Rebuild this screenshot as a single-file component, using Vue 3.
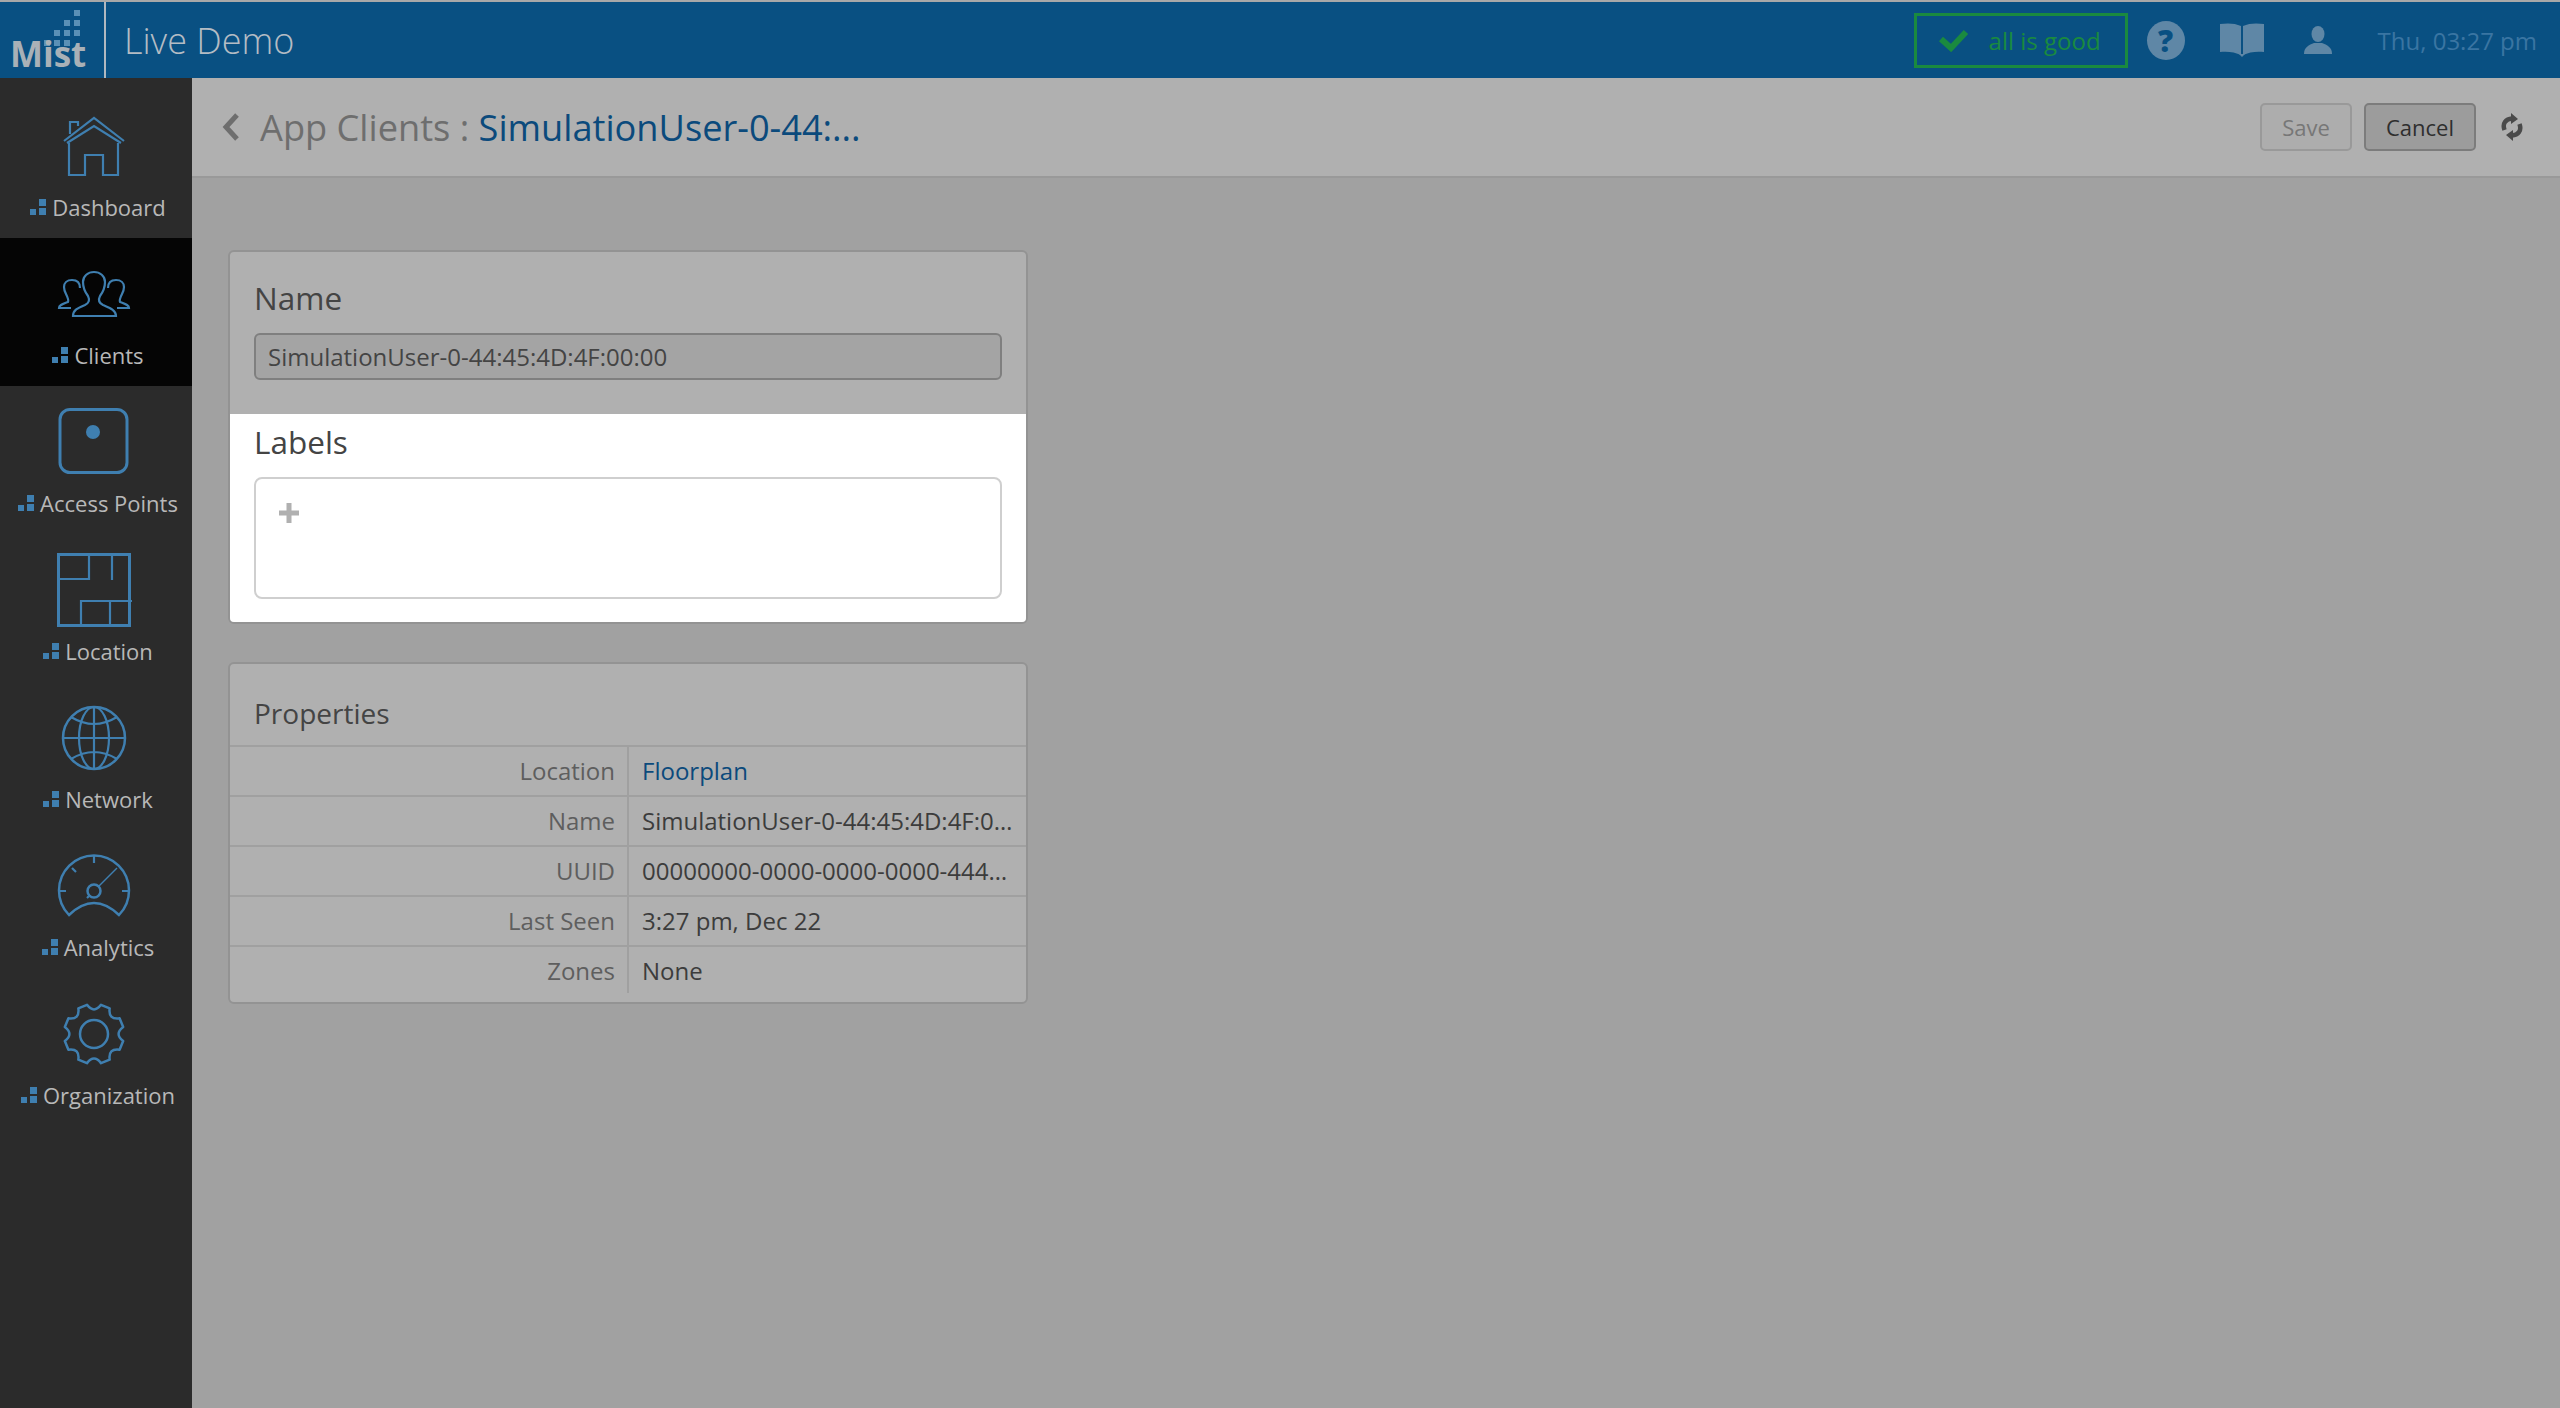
<script setup>
const navItems = [
  { key: 'home', label: 'Dashboard' },
  { key: 'clients', label: 'Clients', active: true },
  { key: 'ap', label: 'Access Points' },
  { key: 'location', label: 'Location' },
  { key: 'network', label: 'Network' },
  { key: 'analytics', label: 'Analytics' },
  { key: 'org', label: 'Organization' }
]

const rows = [
  { label: 'Location', value: 'Floorplan', link: true },
  { label: 'Name', value: 'SimulationUser-0-44:45:4D:4F:00:00' },
  { label: 'UUID', value: '00000000-0000-0000-0000-44454D4F0000' },
  { label: 'Last Seen', value: '3:27 pm, Dec 22' },
  { label: 'Zones', value: 'None' }
]

function gearPath() {
  const pt = (deg, r) => {
    const a = (deg * Math.PI) / 180
    return (36 + r * Math.cos(a)).toFixed(2) + ' ' + (36 + r * Math.sin(a)).toFixed(2)
  }
  let d = ''
  for (let i = 0; i < 8; i++) {
    const t = 22.5 + 45 * i
    d += (i === 0 ? 'M' : 'L') + pt(t - 9, 30) + ' L' + pt(t + 9, 30)
    d += ' Q' + pt(t + 22.5, 20) + ' ' + pt(t + 36, 30) + ' '
  }
  return d + 'Z'
}
const gear = gearPath()
</script>

<template>
  <div class="app">
    <header class="topbar">
      <div class="logo">
        <svg class="logo-dots" width="40" height="36" viewBox="0 0 40 36">
          <g fill="#5a90b6">
            <rect x="34" y="0" width="6" height="6" />
            <rect x="24" y="10" width="6" height="6" /><rect x="34" y="10" width="6" height="6" />
            <rect x="14" y="20" width="6" height="6" /><rect x="24" y="20" width="6" height="6" /><rect x="34" y="20" width="6" height="6" />
            <rect x="4" y="30" width="6" height="6" /><rect x="14" y="30" width="6" height="6" /><rect x="24" y="30" width="6" height="6" />
          </g>
        </svg>
        <span class="logo-text">Mist</span>
      </div>
      <div class="site-name">Live Demo</div>
      <div class="status">
        <svg class="status-check" width="30" height="24" viewBox="0 0 30 24"><path d="M2 11 L12 20 L27 4" fill="none" stroke="#1a8a3f" stroke-width="6" /></svg>
        <span>all is good</span>
      </div>
      <div class="help">?</div>
      <svg class="book" width="44" height="34" viewBox="0 0 44 34">
        <path fill="#5f87a6" d="M0 1 C7 0 15 0 21 3 V32 C15 29 7 28 0 29 Z M23 3 C29 0 37 0 44 1 V29 C37 28 29 29 23 32 Z" />
        <path fill="#5f87a6" d="M19 31 H25 L22 34 Z" />
      </svg>
      <svg class="person" width="28" height="28" viewBox="0 0 28 28">
        <ellipse cx="14" cy="8" rx="6.5" ry="8" fill="#5f87a6" />
        <path fill="#5f87a6" d="M0 28 C0 21 5 19 10 17 H18 C23 19 28 21 28 28 Z" />
      </svg>
      <div class="clock">Thu, 03:27 pm</div>
    </header>

    <div class="main">
      <nav class="sidebar">
        <a v-for="item in navItems" :key="item.key" class="nav-item" :class="{ active: item.active }">
          <svg class="nav-icon" width="72" height="72" viewBox="0 0 72 72" fill="none" stroke="#3f7fb0" stroke-width="2.2">
            <template v-if="item.key === 'home'">
              <path d="M11 33 V65 H27 V45 H45 V65 H60 V33" />
              <path d="M6 31 L36 8 L66 31 M9 33 L36 16 L63 33 M12 24 V12 H20 V16" />
            </template>
            <template v-else-if="item.key === 'clients'">
              <path d="M15 58 C15 52 20 50 27 47 C31 45 32 42 30 38 C27 34 25 28 25 24 C25 18 30 14 36 14 C42 14 47 18 47 24 C47 28 45 34 42 38 C40 42 41 45 45 47 C52 50 58 52 58 58 Z" />
              <path d="M13 50 H1 C1 47 5 46 10 44 C11 42 9 38 8 36 C6 32 6 30 6 29 C6 25 9 22 14 22 C19 22 22 25 22 30" />
              <path d="M59 50 H71 C71 47 67 46 62 44 C61 42 63 38 64 36 C66 32 66 30 66 29 C66 25 63 22 58 22 C53 22 50 25 50 30" />
            </template>
            <template v-else-if="item.key === 'ap'">
              <rect x="2" y="3.5" width="67" height="63" rx="10" stroke-width="3" />
              <circle cx="35" cy="26" r="7" fill="#3f7fb0" stroke="none" />
            </template>
            <template v-else-if="item.key === 'location'">
              <rect x="0.5" y="0.5" width="71" height="71" stroke-width="3" />
              <path d="M1 25 H31 V1 M54 0 V26 M23 72 V47 H74 M52 47 V72" />
            </template>
            <template v-else-if="item.key === 'network'">
              <circle cx="36" cy="36" r="31" stroke-width="2.5" />
              <ellipse cx="36" cy="36" rx="15" ry="31" />
              <path d="M36 5 V67 M5 36 H67 M13 15 Q36 29 59 15 M13 57 Q36 43 59 57" />
            </template>
            <template v-else-if="item.key === 'analytics'">
              <path d="M11 65 A35 35 0 1 1 61 65 Q36 41 11 65 Z" stroke-width="2.5" />
              <path d="M36 6 V13 M1 41 H8 M64 41 H71 M14 18 L18 22 M29 48 L32 45" />
              <path d="M59 18 L40 37" stroke-width="1.5" />
              <circle cx="36" cy="41" r="6.5" stroke-width="2.5" />
            </template>
            <template v-else>
              <path :d="gear" stroke-width="2.5" stroke-linejoin="round" />
              <circle cx="36" cy="36" r="14" stroke-width="2.5" />
            </template>
          </svg>
          <span class="nav-label">
            <svg width="16" height="16" viewBox="0 0 16 16"><path fill="#3f7fb0" d="M0 10 H6 V16 H0 Z M9 0 H16 V7 H9 Z M9 9 H16 V16 H9 Z" /></svg>
            <span>{{ item.label }}</span>
          </span>
        </a>
      </nav>

      <div class="content">
        <div class="subheader">
          <svg class="back" width="18" height="30" viewBox="0 0 18 30"><path d="M15 3 L4 15 L15 27" fill="none" stroke="#6e6e6e" stroke-width="5" /></svg>
          <h1 class="title"><span class="crumb">App Clients : </span><span class="current">SimulationUser-0-44:...</span></h1>
          <div class="actions">
            <button class="btn save">Save</button>
            <button class="btn cancel">Cancel</button>
            <svg class="refresh" width="22" height="28" viewBox="0 0 22 28">
              <g fill="none" stroke="#4a4a4a" stroke-width="4.5">
                <path d="M3.5 17 C1 10 5 6 11 5.5" />
                <path d="M18.5 11 C21 18 17 22 11 22.5" />
              </g>
              <path fill="#4a4a4a" d="M10 0 L17 6 L10 11 Z M12 28 L5 22 L12 17 Z" />
            </svg>
          </div>
        </div>

        <div class="body">
          <section class="card edit-card">
            <div class="name-section">
              <h2 class="field-title">Name</h2>
              <div class="name-input">SimulationUser-0-44:45:4D:4F:00:00</div>
            </div>
            <div class="labels-section">
              <h2 class="field-title">Labels</h2>
              <div class="labels-box">
                <svg width="20" height="20" viewBox="0 0 20 20"><path fill="#b0b0b0" d="M7.5 0 H12.5 V7.5 H20 V12.5 H12.5 V20 H7.5 V12.5 H0 V7.5 H7.5 Z" /></svg>
              </div>
            </div>
          </section>

          <section class="card props-card">
            <h2 class="props-title">Properties</h2>
            <div v-for="row in rows" :key="row.label" class="prop-row">
              <div class="prop-label">{{ row.label }}</div>
              <div class="prop-value" :class="{ link: row.link }">{{ row.value }}</div>
            </div>
          </section>
        </div>
      </div>
    </div>
  </div>
</template>

<style>
html, body { margin: 0; background: #a0a0a0; }
</style>

<style scoped>
.app {
  width: 2560px;
  height: 1408px;
  display: flex;
  flex-direction: column;
  overflow: hidden;
  font-family: "Open Sans", "Noto Sans", sans-serif;
  background: #a1a1a1;
  color: #4a4a4a;
  border-top: 2px solid #a8a8a8;
  box-sizing: border-box;
}
.topbar {
  height: 76px;
  flex: none;
  display: flex;
  align-items: center;
  background: #095082;
}
.logo {
  width: 104px;
  height: 76px;
  flex: none;
  border-right: 2px solid #b0b8c0;
  position: relative;
}
.logo-dots { position: absolute; left: 40px; top: 8px; }
.logo-text {
  position: absolute;
  left: 10px;
  top: 30px;
  font-size: 35px;
  line-height: 44px;
  font-weight: 700;
  color: #a9b1b7;
}
.site-name {
  margin-left: 18px;
  font-size: 36px;
  font-weight: 300;
  color: #b4bcc4;
}
.status {
  margin-left: auto;
  width: 214px;
  height: 55px;
  box-sizing: border-box;
  border: 3.5px solid #1a8a3f;
  display: flex;
  align-items: center;
  gap: 20px;
  padding-left: 22px;
  color: #1a8a3f;
  font-size: 24px;
  font-weight: 400;
}
.help {
  margin-left: 19px;
  width: 38px;
  height: 39px;
  border-radius: 50%;
  background: #5f87a6;
  color: #095082;
  font-size: 30px;
  font-weight: 800;
  line-height: 39px;
  text-align: center;
}
.book { margin-left: 35px; }
.person { margin-left: 40px; }
.clock {
  margin-left: 46px;
  margin-right: 23px;
  font-size: 24px;
  font-weight: 400;
  color: #3a75a2;
}
.main { flex: 1; display: flex; min-height: 0; }
.sidebar {
  width: 192px;
  flex: none;
  padding-top: 12px;
  background: #2b2b2b;
  box-sizing: border-box;
}
.nav-item {
  height: 148px;
  box-sizing: border-box;
  padding-top: 20px;
  display: flex;
  flex-direction: column;
  align-items: center;
}
.nav-item.active { background: #050505; }
.nav-icon { overflow: visible; flex: none; margin-right: 4px; }
.nav-label {
  margin: 10px 0 0 4px;
  height: 30px;
  display: flex;
  align-items: center;
  gap: 6px;
  font-size: 22px;
  font-weight: 500;
  color: #b8b8b8;
  white-space: nowrap;
}
.nav-label svg { flex: none; }
.content { flex: 1; min-width: 0; display: flex; flex-direction: column; }
.subheader {
  height: 100px;
  flex: none;
  box-sizing: border-box;
  border-bottom: 2px solid #999;
  background: #b0b0b0;
  display: flex;
  align-items: center;
  padding-left: 30px;
}
.back { flex: none; margin-right: 20px; }
.title { margin: 0; font-size: 36.2px; font-weight: 400; }
.crumb { color: #6e6e6e; }
.current { color: #0b4a7c; }
.actions { margin-left: auto; display: flex; align-items: center; padding-right: 37px; }
.btn {
  height: 48px;
  box-sizing: border-box;
  border-radius: 5px;
  font: 400 22px "Open Sans", sans-serif;
  padding: 0;
}
.save { width: 92px; background: #adadad; border: 2px solid #999; color: #777; }
.cancel { width: 112px; margin-left: 12px; background: #9c9c9c; border: 2px solid #7c7c7c; color: #2e2e2e; }
.refresh { margin-left: 25px; }
.body { flex: 1; padding: 72px 0 0 36px; }
.card {
  width: 800px;
  box-sizing: border-box;
  border: 2px solid #939393;
  border-radius: 6px;
  background: #b0b0b0;
}
.edit-card { overflow: hidden; height: 374px; }
.name-section { height: 162px; padding: 24px 24px 0; box-sizing: border-box; }
.field-title { margin: 0; font-size: 31.5px; line-height: 44px; font-weight: 400; color: #444; }
.name-input {
  margin-top: 13px;
  height: 47px;
  box-sizing: border-box;
  border: 2px solid #7f7f7f;
  border-radius: 6px;
  background: #a4a4a4;
  padding-left: 12px;
  line-height: 43px;
  font-size: 24px;
  color: #444;
}
.labels-section { height: 208px; padding: 6px 24px 0; box-sizing: border-box; background: #fff; }
.labels-box {
  margin-top: 13px;
  height: 122px;
  box-sizing: border-box;
  border: 2px solid #cfcfcf;
  border-radius: 8px;
  padding: 24px 0 0 23px;
}
.props-card { margin-top: 38px; height: 342px; }
.props-title {
  margin: 0;
  height: 83px;
  box-sizing: border-box;
  padding: 29px 0 0 24px;
  font-size: 28px;
  line-height: 40px;
  font-weight: 400;
  color: #444;
  border-bottom: 2px solid #a0a0a0;
}
.prop-row {
  height: 50px;
  display: flex;
  font-size: 24px;
  line-height: 48px;
  border-bottom: 2px solid #a0a0a0;
  box-sizing: border-box;
}
.prop-row:last-child { border-bottom: 0; height: 46px; }
.prop-label {
  width: 399px;
  flex: none;
  box-sizing: border-box;
  padding-right: 12px;
  text-align: right;
  color: #5e5e5e;
  border-right: 2px solid #a0a0a0;
}
.prop-value {
  flex: 1;
  min-width: 0;
  padding: 0 12px 0 13px;
  white-space: nowrap;
  overflow: hidden;
  text-overflow: ellipsis;
  color: #3c3c3c;
}
.prop-value.link { color: #0b4a7c; }
</style>
